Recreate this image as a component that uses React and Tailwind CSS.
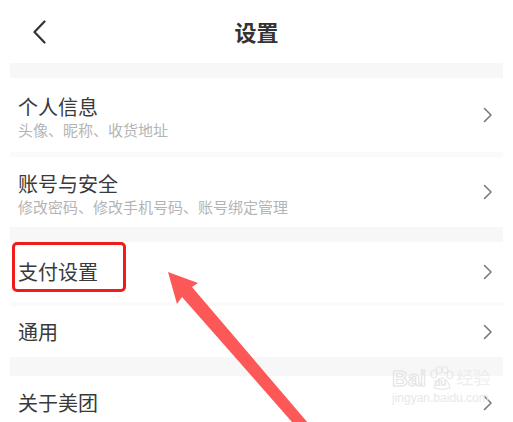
import React from 'react';

const font = { fontFamily: '"Noto Sans CJK SC", "Noto Sans", sans-serif' };

function Chevron() {
  return (
    <svg width="10" height="16" viewBox="0 0 10 16" className="shrink-0">
      <path d="M1.5 1.5 L8 8 L1.5 14.5" fill="none" stroke="#7a7a7a" strokeWidth="1.6" strokeLinecap="round" strokeLinejoin="round" />
    </svg>
  );
}

function Row({ title, sub, className = '', children }) {
  return (
    <div className={`relative flex items-center justify-between pl-[18px] pr-[20px] ${className}`}>
      <div className={`flex flex-col ${sub ? 'mt-[6px]' : ''}`}>
        <div className="text-[20px] leading-[24px] text-[#3a3a3a]">{title}</div>
        {sub && <div className="text-[15px] leading-[22px] text-[#b4b4b4]">{sub}</div>}
      </div>
      <Chevron />
      {children}
    </div>
  );
}

export default function App() {
  return (
    <div className="relative w-[513px] h-[422px] overflow-hidden bg-white" style={font}>
      {/* header */}
      <div className="flex items-center h-[63px] px-[33px]">
        <svg width="13" height="24" viewBox="0 0 13 24" className="shrink-0">
          <path d="M11.5 1.5 L1.5 12 L11.5 22.5" fill="none" stroke="#333" strokeWidth="2.2" strokeLinecap="round" strokeLinejoin="round" />
        </svg>
        <div className="flex-1 text-center text-[22px] font-bold text-[#333]">设置</div>
        <div className="w-[13px]" />
      </div>
      <div className="mx-[10px] h-[15px] bg-[#f7f7f7]" />

      <Row title="个人信息" sub="头像、昵称、收货地址" className="h-[74px]" />
      <div className="mx-[10px] h-[5px] bg-[#fafafa]" />
      <Row title="账号与安全" sub="修改密码、修改手机号码、账号绑定管理" className="h-[70px]" />
      <div className="mx-[10px] h-[15px] bg-[#f7f7f7]" />
      <Row title="支付设置" className="h-[60px]">
        <div className="absolute left-[12px] top-0 w-[114px] h-[50px] border-[3px] border-[#ef1c1c] rounded-[5px]" />
      </Row>
      <div className="mx-[10px] h-[4px] bg-[#fafafa]" />
      <Row title="通用" className="h-[51px]" />
      <div className="mx-[10px] h-[19px] bg-[#f7f7f7]" />
      <Row title="关于美团" className="h-[54px]" />

      {/* watermark */}
      <div className="absolute left-[392px] top-[366px] flex flex-col pointer-events-none" style={{ fontFamily: '"Liberation Sans", "Noto Sans CJK SC", sans-serif' }}>
        <div className="flex items-center gap-[2px]">
          <span className="text-[22px] leading-[26px] font-bold text-transparent [-webkit-text-stroke:1px_#e2e2e2]">Bai</span>
          <span className="relative w-[26px] h-[26px]">
            <svg width="26" height="26" viewBox="0 0 26 26" className="absolute left-0 top-0">
              <ellipse cx="6" cy="8" rx="3" ry="4" fill="none" stroke="#e4e4e4" />
              <ellipse cx="11" cy="4" rx="3" ry="3.5" fill="none" stroke="#e4e4e4" />
              <ellipse cx="17" cy="4" rx="3" ry="3.5" fill="none" stroke="#e4e4e4" />
              <ellipse cx="22" cy="9" rx="3" ry="4" fill="none" stroke="#e4e4e4" />
              <path d="M6 22 Q8 13 14 12 Q20 13 22 22 Q14 25 6 22Z" fill="none" stroke="#e4e4e4" />
            </svg>
            <span className="absolute left-[6px] top-[11px] text-[10px] leading-[12px] font-bold text-[#e6e6e6]">du</span>
          </span>
          <span className="text-[17px] leading-[22px] text-[#ededed]">经验</span>
        </div>
        <div className="text-[12px] leading-[14px] text-[#e8e8e8] -mt-[1px]">jingyan.baidu.com</div>
      </div>

      {/* annotation arrow */}
      <svg width="513" height="422" viewBox="0 0 513 422" className="absolute left-0 top-0 pointer-events-none">
        <polygon points="168,272 198,283 192,287 314,430 299,430 182,297 177,304" fill="#fd5858" />
      </svg>
    </div>
  );
}
